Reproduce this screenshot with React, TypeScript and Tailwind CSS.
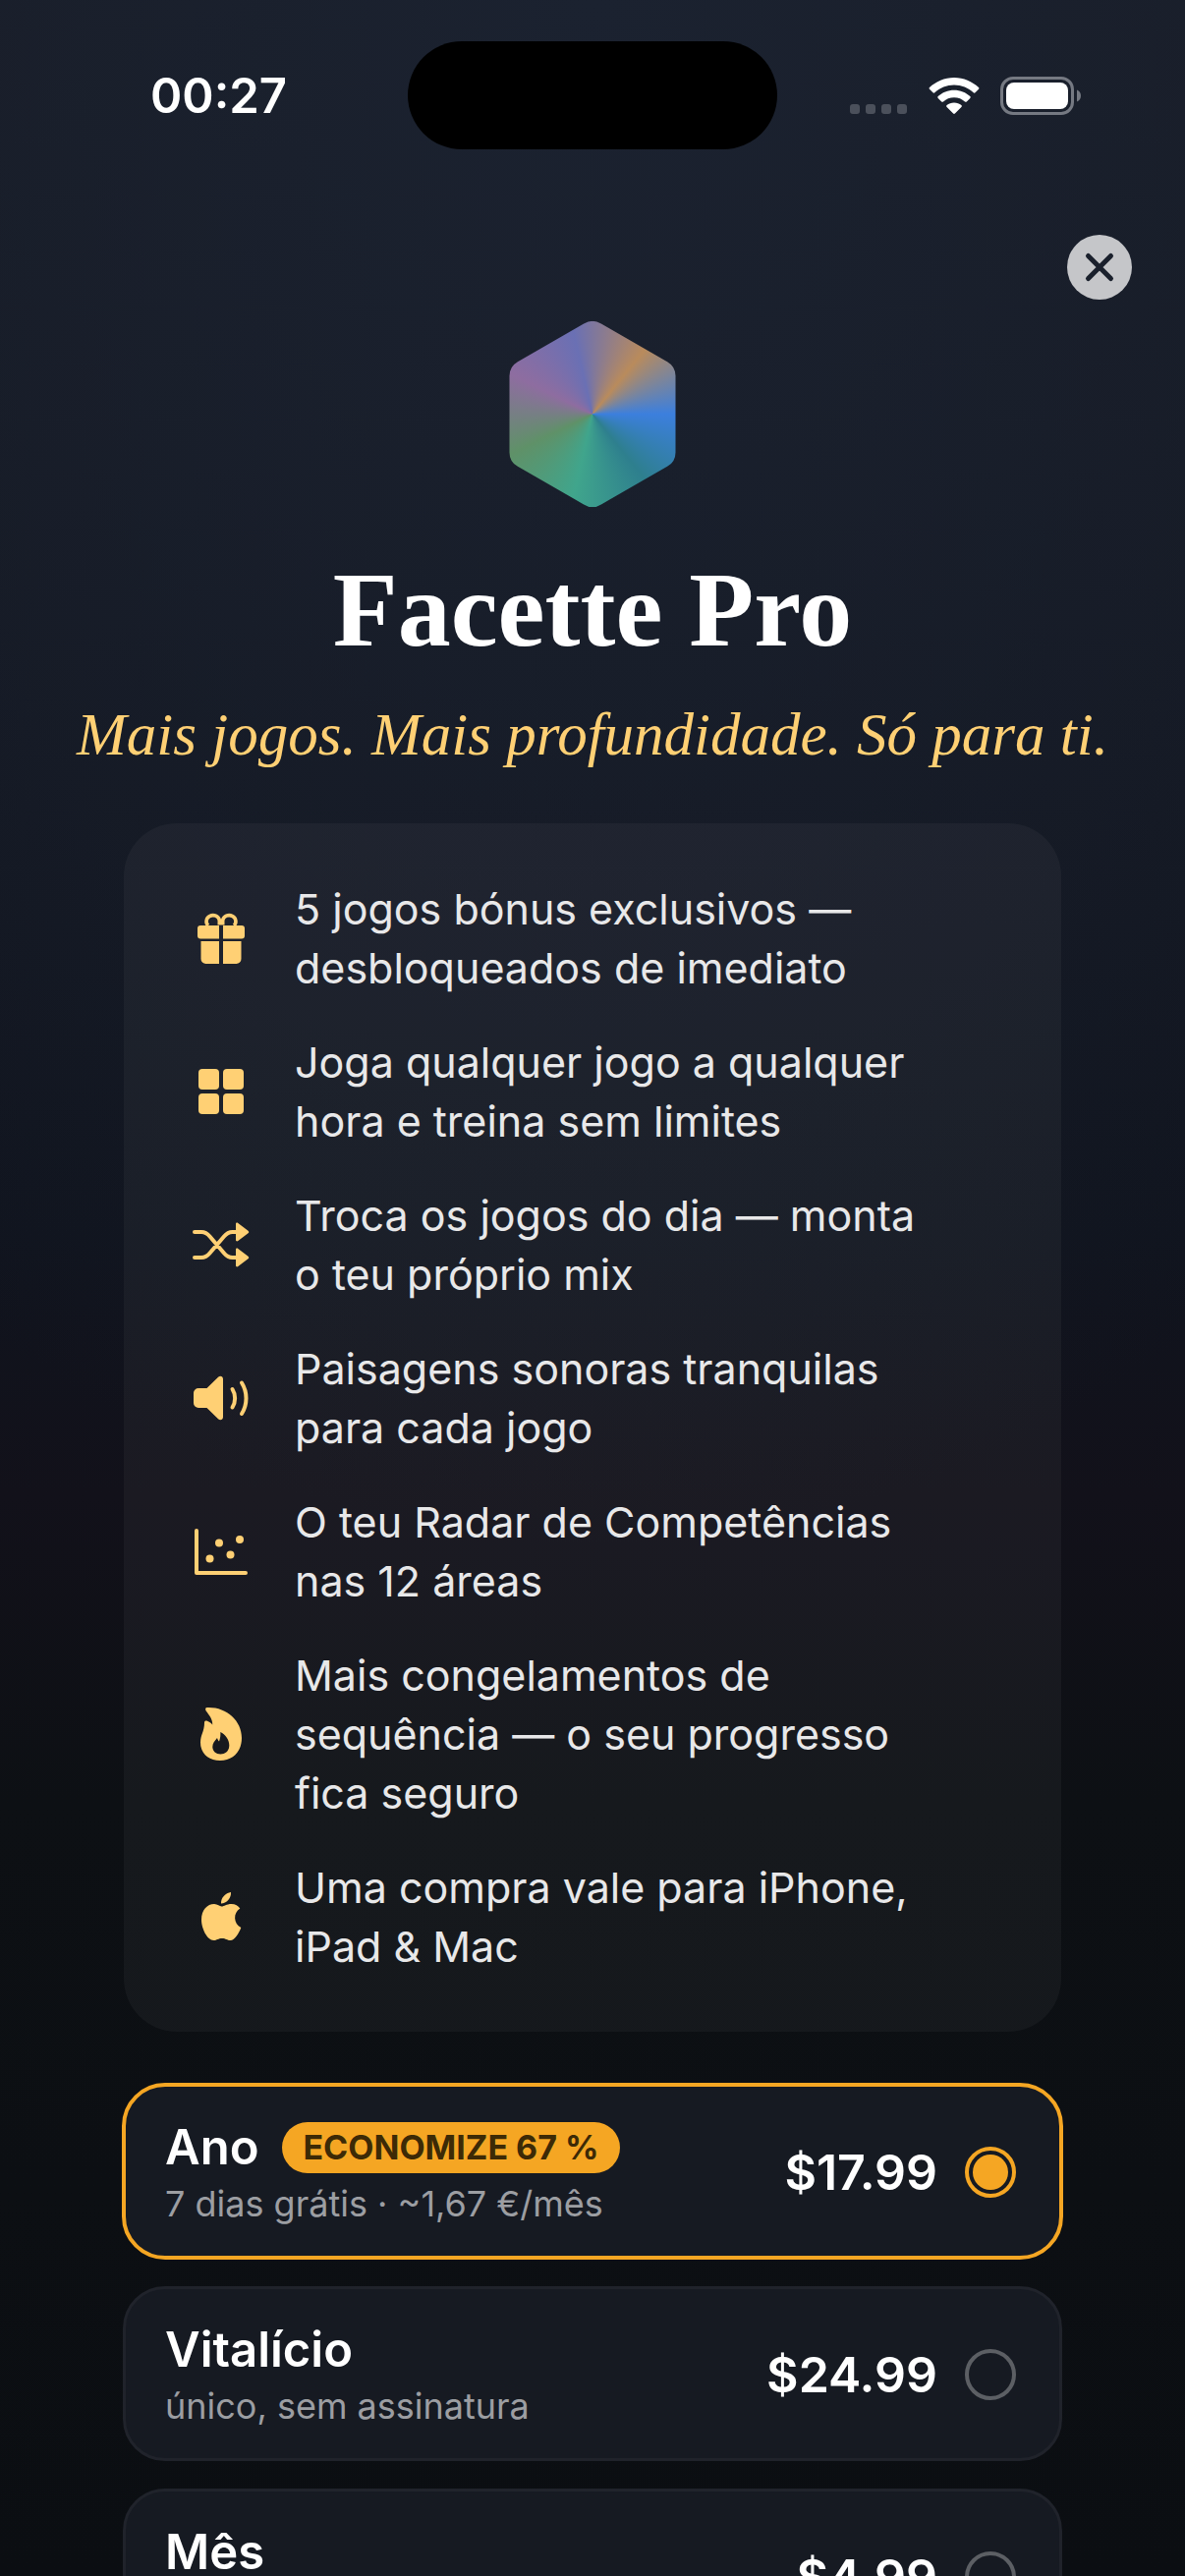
import React, { useState } from "react";

type IconProps = { children: React.ReactNode };

function Icon({ children }: IconProps) {
    return (
        <svg viewBox="0 0 60 60" className="h-[60px] w-[60px] shrink-0 text-[#ffd074]" fill="currentColor" aria-hidden="true">
            {children}
        </svg>
    );
}

const GiftIcon = () => (
    <Icon>
        <path d="M28.300 16.500V11.500a6.700 6.200 0 1 0-11.500 5.500M31.700 16.500V11.500a6.700 6.200 0 1 1 11.500 5.500" fill="none" stroke="currentColor" strokeWidth="3.600" />
        <path d="M9 17h19v13.500H9a3 3 0 0 1-3-3V20a3 3 0 0 1 3-3zM32 17h19a3 3 0 0 1 3 3v7.500a3 3 0 0 1-3 3H32z" />
        <path d="M9.500 33H28v23H14.500a5 5 0 0 1-5-5zM32 33h18.500v18a5 5 0 0 1-5 5H32z" />
    </Icon>
);

const GridIcon = () => (
    <Icon>
        <rect x="7" y="7" width="21" height="21" rx="4" />
        <rect x="32" y="7" width="21" height="21" rx="4" />
        <rect x="7" y="32" width="21" height="21" rx="4" />
        <rect x="32" y="32" width="21" height="21" rx="4" />
    </Icon>
);

const ShuffleIcon = () => (
    <Icon>
        <path d="M3 17h7c4 0 6 1.500 8.500 4.500L33 38.500c2.500 3 4.500 4.500 8.500 4.500H47M3 43h7c4 0 6-1.500 8.500-4.500L33 21.500c2.500-3 4.500-4.500 8.500-4.500H47" fill="none" stroke="currentColor" strokeWidth="4" strokeLinecap="round" />
        <path d="M45 9v16c0 1.500 1.300 1.800 2.300 1L57.500 18.300c1-.8 1-1.800 0-2.600L47.300 8c-1-.8-2.300-.5-2.300 1zM45 35v16c0 1.500 1.300 1.800 2.300 1l10.200-7.700c1-.8 1-1.800 0-2.600L47.300 34c-1-.8-2.300-.5-2.300 1z" />
    </Icon>
);

const SoundIcon = () => (
    <Icon>
        <path d="M7 20h8.500L27 8.800c2-1.800 5-1 5 2v38.500c0 3-3 3.800-5 2L15.500 40H7a5 5 0 0 1-5-5V25a5 5 0 0 1 5-5z" />
        <path d="M41.500 21c3.500 5.500 3.500 13 0 18.500M51 14.500c6 9.500 6 22 0 31.500" fill="none" stroke="currentColor" strokeWidth="4" strokeLinecap="round" />
    </Icon>
);

const ChartIcon = () => (
    <Icon>
        <path d="M5 9v43h50" fill="none" stroke="currentColor" strokeWidth="4" strokeLinecap="round" strokeLinejoin="round" />
        <circle cx="18.500" cy="37.500" r="4" />
        <circle cx="28" cy="21.500" r="4" />
        <circle cx="39.500" cy="33.500" r="4" />
        <circle cx="49" cy="18" r="4" />
    </Icon>
);

const FlameIcon = () => (
    <Icon>
        <path
            fillRule="evenodd"
            d="M15.500 3C35 2 51 16 51 34c0 14-9 23-22 23C17 57 9 49.500 9 38.500c0-8 4-11 4-20 0-2 1.500-2.300 3-1.700 2 .7 3.800 2 5.200 3.800C21.500 15 18 11 14.700 6.500c-1-1.500-.7-3.200.8-3.500zM29.300 28c.3 4-.3 7-1.300 9.500-1-.8-1.500-2-2-3.500-2.500 3-4.700 5.500-4.700 9 0 4.500 3.500 7.500 8.200 7.500 5 0 8.800-3.500 8.800-9 0-6-4-11-9-13.500z"
        />
    </Icon>
);

const AppleIcon = () => (
    <Icon>
        <path d="M40 5c.5 6-4.500 11.500-10 11.500C29.500 11 34.500 5.500 40 5z" />
        <path d="M30.500 19.500c2.500 0 5-2.500 10-2.500 4 0 7 2 8.800 4.500C42 26 42.500 37 50.300 41c-2 5.500-6.300 13-10.800 13-3.500 0-4.500-2-8.500-2s-5.200 2-8.500 2C16 54 10 42 10 33c0-10 6-16 13-16 3.500 0 5.500 2.500 7.500 2.500z" />
    </Icon>
);

const features = [
    { icon: <GiftIcon />, text: "5 jogos bónus exclusivos — desbloqueados de imediato" },
    { icon: <GridIcon />, text: "Joga qualquer jogo a qualquer hora e treina sem limites" },
    { icon: <ShuffleIcon />, text: "Troca os jogos do dia — monta o teu próprio mix" },
    { icon: <SoundIcon />, text: "Paisagens sonoras tranquilas para cada jogo" },
    { icon: <ChartIcon />, text: "O teu Radar de Competências nas 12 áreas" },
    { icon: <FlameIcon />, text: "Mais congelamentos de sequência — o seu progresso fica seguro" },
    { icon: <AppleIcon />, text: "Uma compra vale para iPhone, iPad & Mac" },
];

const plans = [
    { id: "year", name: "Ano", badge: "ECONOMIZE 67 %", note: "7 dias grátis · ~1,67 €/mês", price: "$17.99" },
    { id: "lifetime", name: "Vitalício", note: "único, sem assinatura", price: "$24.99" },
    { id: "month", name: "Mês", price: "$4.99" },
];

function StatusBar() {
    return (
        <header className="grid grid-cols-[1fr_376px_1fr] items-center pt-[42px]">
            <time className="pt-[2px] pl-[153px] text-[49px] leading-[60px] font-semibold">00:27</time>
            <div className="h-[110px] rounded-full bg-black" />
            <div className="flex items-center justify-end gap-[21px] pr-[106px]">
                <svg viewBox="0 0 59 38" className="h-[38px] w-[59px]" fill="#4b505b" aria-hidden="true">
                    <rect x="0" y="28" width="10" height="10" rx="3" />
                    <rect x="16" y="28" width="10" height="10" rx="3" />
                    <rect x="32" y="28" width="10" height="10" rx="3" />
                    <rect x="48" y="28" width="10" height="10" rx="3" />
                </svg>
                <svg viewBox="0 0 52 38" className="h-[38px] w-[52px]" fill="white" aria-hidden="true">
                    <path d="M26 1c9.700 0 18.500 4 25 10 .6.600.6 1.200 0 1.800L47.500 16.300c-.6.600-1.200.6-1.800 0C40.500 11.300 33.500 8.400 26 8.400S11.500 11.300 6.300 16.300c-.6.600-1.200.6-1.800 0L1 12.800c-.6-.6-.6-1.200 0-1.800C7.500 5 16.300 1 26 1z" />
                    <path d="M26 13.800c6.300 0 12 2.400 16.300 6.300.6.600.6 1.200 0 1.800l-3.500 3.500c-.6.600-1.200.6-1.800 0-3-2.700-6.700-4.200-11-4.200s-8 1.500-11 4.200c-.6.600-1.200.6-1.800 0l-3.500-3.500c-.6-.6-.6-1.200 0-1.800C14 16.200 19.700 13.800 26 13.800z" />
                    <path d="M26 26.500c2.900 0 5.400 1 7.400 2.600.6.600.6 1.200 0 1.800l-6.500 6.600c-.6.600-1.200.6-1.800 0l-6.500-6.600c-.6-.6-.6-1.200 0-1.800 2-1.600 4.500-2.600 7.400-2.600z" />
                </svg>
                <svg viewBox="0 0 82 39" className="h-[39px] w-[82px]" aria-hidden="true">
                    <rect x="1.500" y="1.500" width="72" height="36" rx="11.500" fill="none" stroke="#757982" strokeWidth="3" />
                    <rect x="6" y="6" width="63" height="27" rx="8" fill="white" />
                    <path d="M78 13.500c2.500 1 4 3 4 6s-1.500 5-4 6z" fill="#757982" />
                </svg>
            </div>
        </header>
    );
}

function Logo() {
    return (
        <svg viewBox="0 0 172 192" className="h-[191px] w-[170px]" aria-hidden="true">
            <clipPath id="hexagon">
                <path d="M77 3a17 17 0 0 1 18 0l68 39a17 17 0 0 1 8.500 15v78a17 17 0 0 1-8.500 15l-68 39a17 17 0 0 1-18 0L9 150a17 17 0 0 1-8.500-15V57A17 17 0 0 1 9 42z" />
            </clipPath>
            <foreignObject width="172" height="192" clipPath="url(#hexagon)">
                <div className="h-[192px] w-[172px] bg-[conic-gradient(from_90deg_at_50%_50%,#3c7fdd,#2e7f8e_51deg,#40a58c_103deg,#5f9168_154deg,#8e6da0_206deg,#6a70b4_257deg,#b98b5c_309deg,#3c7fdd)]" />
            </foreignObject>
        </svg>
    );
}

export default function App() {
    const [selected, setSelected] = useState("year");

    return (
        <div className="h-screen overflow-y-auto bg-[radial-gradient(ellipse_100%_60%_at_50%_0%,#1b2230,transparent),linear-gradient(to_bottom,#181c26,#10141e_48%,#12111a_58%,#0d1014_70%,#0b0e12)] font-[Inter,sans-serif] text-white [scrollbar-width:none]">
            <StatusBar />
            <div className="flex justify-end pt-[87px] pr-[54px]">
                <button type="button" aria-label="Fechar" className="h-[66px] w-[66px] rounded-full bg-[#c5c6c9]">
                    <svg viewBox="0 0 66 66" fill="none" stroke="#1a202c" strokeWidth="5" strokeLinecap="round" aria-hidden="true">
                        <path d="M21.500 21.500l23 23M44.500 21.500l-23 23" />
                    </svg>
                </button>
            </div>

            <section className="flex flex-col items-center pt-[21px]">
                <Logo />
                <h1 className="pt-[44px] font-['Liberation_Serif',serif] text-[108px] leading-[120px] font-bold">Facette Pro</h1>
                <p className="pt-[31px] font-['Liberation_Serif',serif] text-[61px] leading-[72px] whitespace-nowrap text-[#ffd074] italic">
                    Mais jogos. Mais profundidade. Só para ti.
                </p>
            </section>

            <main className="px-[126px] pt-[54px]">
                <ul className="flex flex-col gap-[36px] rounded-[54px] bg-white/4 py-[57px] pr-[130px] pl-[69px]">
                    {features.map((feature) => (
                        <li key={feature.text} className="flex items-center gap-[45px]">
                            {feature.icon}
                            <span className="text-[43px] leading-[60px] text-[#e8e8e9]">{feature.text}</span>
                        </li>
                    ))}
                </ul>

                <fieldset aria-label="Facette Pro" className="flex flex-col gap-[30px] py-[54px]">
                    {plans.map((plan) => (
                        <label
                            key={plan.id}
                            className="flex min-h-[176px] cursor-pointer items-center rounded-[42px] bg-[#161a22] pt-[2px] pr-[46px] pl-[42px] outline-3 -outline-offset-2 outline-[#20232b] has-checked:outline-4 has-checked:outline-[#f5a623]"
                        >
                            <span className="flex flex-1 flex-col gap-[3px]">
                                <span className="flex items-center gap-[24px]">
                                    <span className="text-[49px] leading-[60px] font-semibold">{plan.name}</span>
                                    {plan.badge && (
                                        <span className="rounded-full bg-[#f5a623] px-[21px] text-[34px] leading-[52px] font-bold text-[#3d2a06]">
                                            {plan.badge}
                                        </span>
                                    )}
                                </span>
                                <span className="min-h-[48px] text-[36px] leading-[48px] text-[#9c9ea2]">{plan.note}</span>
                            </span>
                            <span className="text-[50px] leading-[60px] font-semibold">{plan.price}</span>
                            <input
                                type="radio"
                                name="plan"
                                value={plan.id}
                                checked={selected === plan.id}
                                onChange={() => setSelected(plan.id)}
                                className="ml-[28px] h-[52px] w-[52px] appearance-none rounded-full border-4 border-[#5c5f64] bg-clip-content p-[4px] checked:border-[#f5a623] checked:bg-[#f5a623]"
                            />
                        </label>
                    ))}
                </fieldset>
            </main>
        </div>
    );
}
